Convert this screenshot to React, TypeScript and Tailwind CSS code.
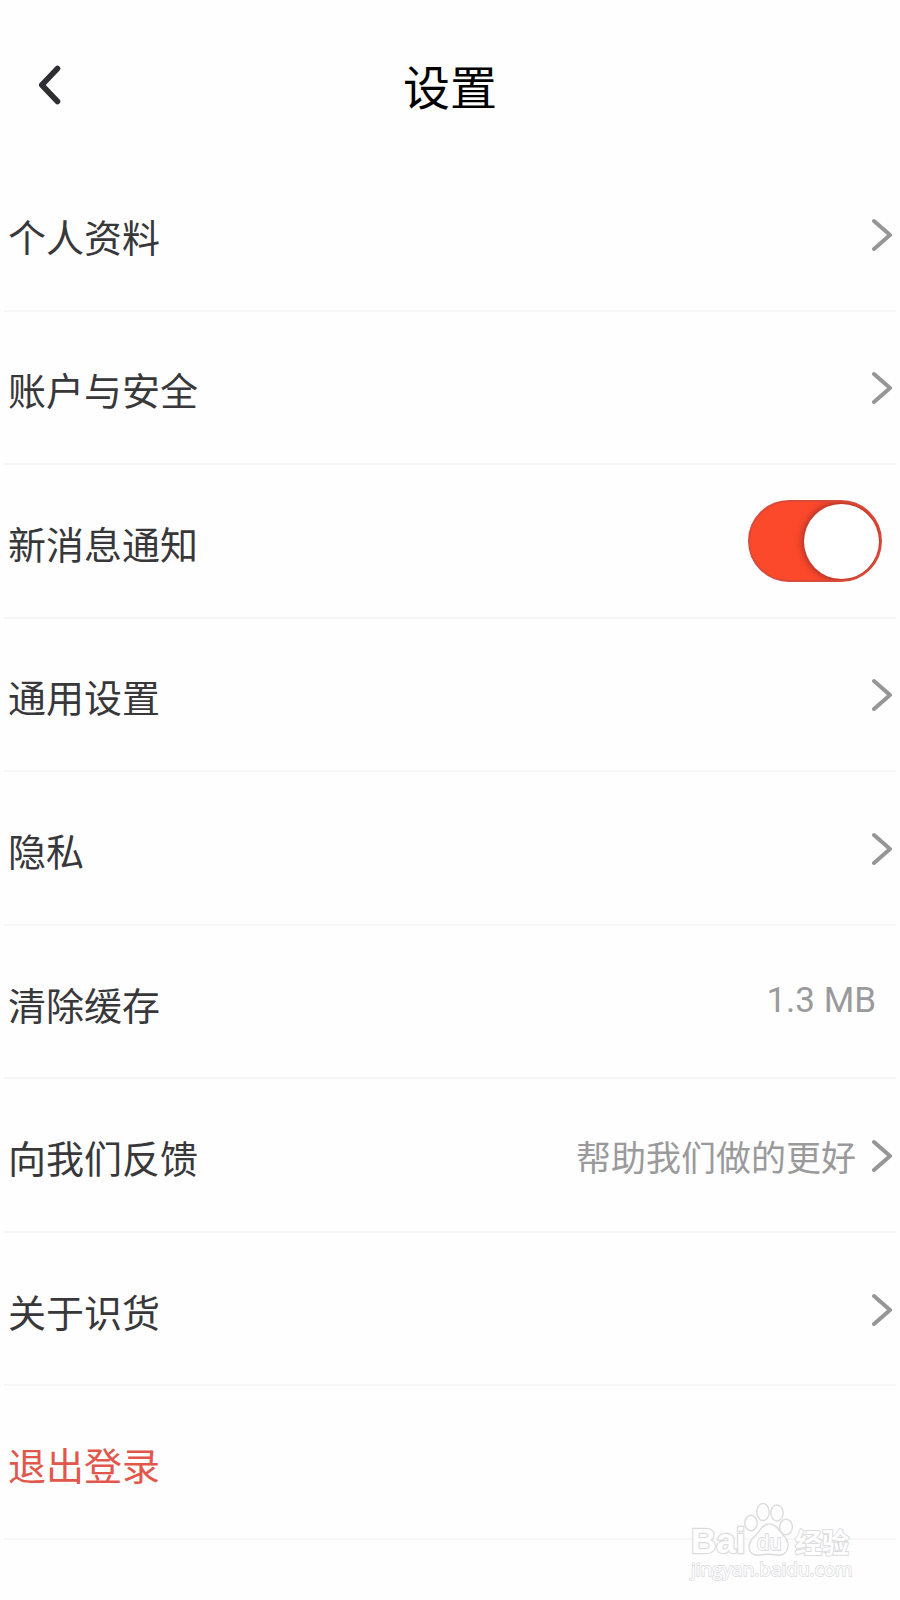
import type { ReactNode } from "react";

type Item = {
  label: string;
  kind: "link" | "toggle" | "action";
  value?: string;
  danger?: boolean;
};

const items: Item[] = [
  { label: "个人资料", kind: "link" },
  { label: "账户与安全", kind: "link" },
  { label: "新消息通知", kind: "toggle" },
  { label: "通用设置", kind: "link" },
  { label: "隐私", kind: "link" },
  { label: "清除缓存", kind: "action", value: "1.3 MB" },
  { label: "向我们反馈", kind: "link", value: "帮助我们做的更好" },
  { label: "关于识货", kind: "link" },
  { label: "退出登录", kind: "action", danger: true },
];

function BackIcon() {
  return (
    <svg width="24" height="42" viewBox="0 0 24 42" fill="none" aria-hidden="true">
      <path d="M19.5 4.5 L3.8 21 L19.5 37.5" stroke="#2f2f33" strokeWidth="5.6" strokeLinecap="round" strokeLinejoin="round" />
    </svg>
  );
}

function Chevron() {
  return (
    <svg width="22" height="34" viewBox="0 0 22 34" fill="none" className="shrink-0" aria-hidden="true">
      <path d="M4 4 L20 18 L4 32" stroke="#969699" strokeWidth="4" strokeLinecap="round" strokeLinejoin="round" />
    </svg>
  );
}

function Toggle({ id }: { id: string }) {
  return (
    <input
      id={id}
      type="checkbox"
      role="switch"
      defaultChecked
      className="relative mr-2.5 h-[82px] w-[134px] shrink-0 cursor-pointer appearance-none overflow-hidden rounded-full border-2 border-[#c4514a] bg-gray-200 before:absolute before:top-[2px] before:left-[2px] before:size-[75px] before:rounded-full before:bg-white before:shadow-[0_0_6px_2px_#a8352a] checked:border-[#d84a3a] checked:bg-[#fc482b] checked:before:left-[54px]"
    />
  );
}

function Row({ item, children }: { item: Item; children?: ReactNode }) {
  return (
    <>
      <span className={item.danger ? "pt-2.5 text-[#e2574c]" : "pt-2.5 text-[#38383b]"}>{item.label}</span>
      <span className="flex items-center gap-3.5">{children}</span>
    </>
  );
}

const rowClass = "flex w-full items-center justify-between px-1 text-left";

function SettingsRow({ item }: { item: Item }) {
  if (item.kind === "toggle") {
    return (
      <div className={rowClass}>
        <label htmlFor="notify" className="pt-2.5 text-[#38383b]">{item.label}</label>
        <Toggle id="notify" />
      </div>
    );
  }
  if (item.kind === "action") {
    return (
      <button type="button" className={rowClass}>
        <Row item={item}>
          {item.value && <span className="pr-4 pb-0.5 text-[35px] leading-12 text-[#9a9a9c]">{item.value}</span>}
        </Row>
      </button>
    );
  }
  return (
    <a href="#" className={rowClass}>
      <Row item={item}>
        {item.value && <span className="pt-2.5 text-[35px] leading-12 text-[#9a9a9c]">{item.value}</span>}
        <Chevron />
      </Row>
    </a>
  );
}

function Watermark() {
  return (
    <svg
      width="170"
      height="84"
      viewBox="0 0 170 84"
      className="pointer-events-none absolute right-12 bottom-4"
      fill="#fefefe"
      stroke="#dcdcde"
      strokeWidth="1.4"
    >
      <g paintOrder="stroke">
        <text x="9" y="53" fontSize="35" fontWeight="700" strokeWidth="2.4" fontFamily="Liberation Sans, sans-serif">Bai</text>
        <text x="113" y="53" fontSize="27" fontWeight="700" strokeWidth="2" fontFamily="Noto Sans CJK SC, sans-serif">经验</text>
        <text x="9" y="76" fontSize="19" strokeWidth="1.6" fontFamily="Open Sans, sans-serif">jingyan.baidu.com</text>
      </g>
      <ellipse cx="69" cy="23" rx="6.2" ry="7.8" />
      <ellipse cx="81" cy="12" rx="6.2" ry="8.5" />
      <ellipse cx="95" cy="13" rx="6.2" ry="8" />
      <ellipse cx="104" cy="27" rx="6.4" ry="7.8" />
      <path d="M87 24 C94 24 97 30 101 35 C105 39 107 42 106 47 C105 53 100 56 95 55 C89 54 84 54 78 55 C72 56 67 53 67 47 C67 42 70 39 74 35 C78 31 80 24 87 24 Z" />
      <text x="75" y="50" fontSize="22" strokeWidth="1.8" paintOrder="stroke" fontFamily="Liberation Sans, sans-serif">du</text>
    </svg>
  );
}

export default function App() {
  return (
    <main className="relative flex min-h-screen flex-col bg-[#fefefe] pb-[60px] font-[Roboto,'Noto_Sans_CJK_SC',sans-serif]">
      <header className="grid h-[158px] grid-cols-[1fr_auto_1fr] items-center px-[38px] pt-3">
        <button type="button" aria-label="返回" className="justify-self-start">
          <BackIcon />
        </button>
        <h1 className="pt-2 text-[47px] leading-16 text-black">设置</h1>
      </header>
      <ul className="grid flex-1 auto-rows-fr text-[38px] leading-14">
        {items.map((item) => (
          <li key={item.label} className="mx-1 flex border-b-2 border-[#f6f6f8]">
            <SettingsRow item={item} />
          </li>
        ))}
      </ul>
      <Watermark />
    </main>
  );
}
